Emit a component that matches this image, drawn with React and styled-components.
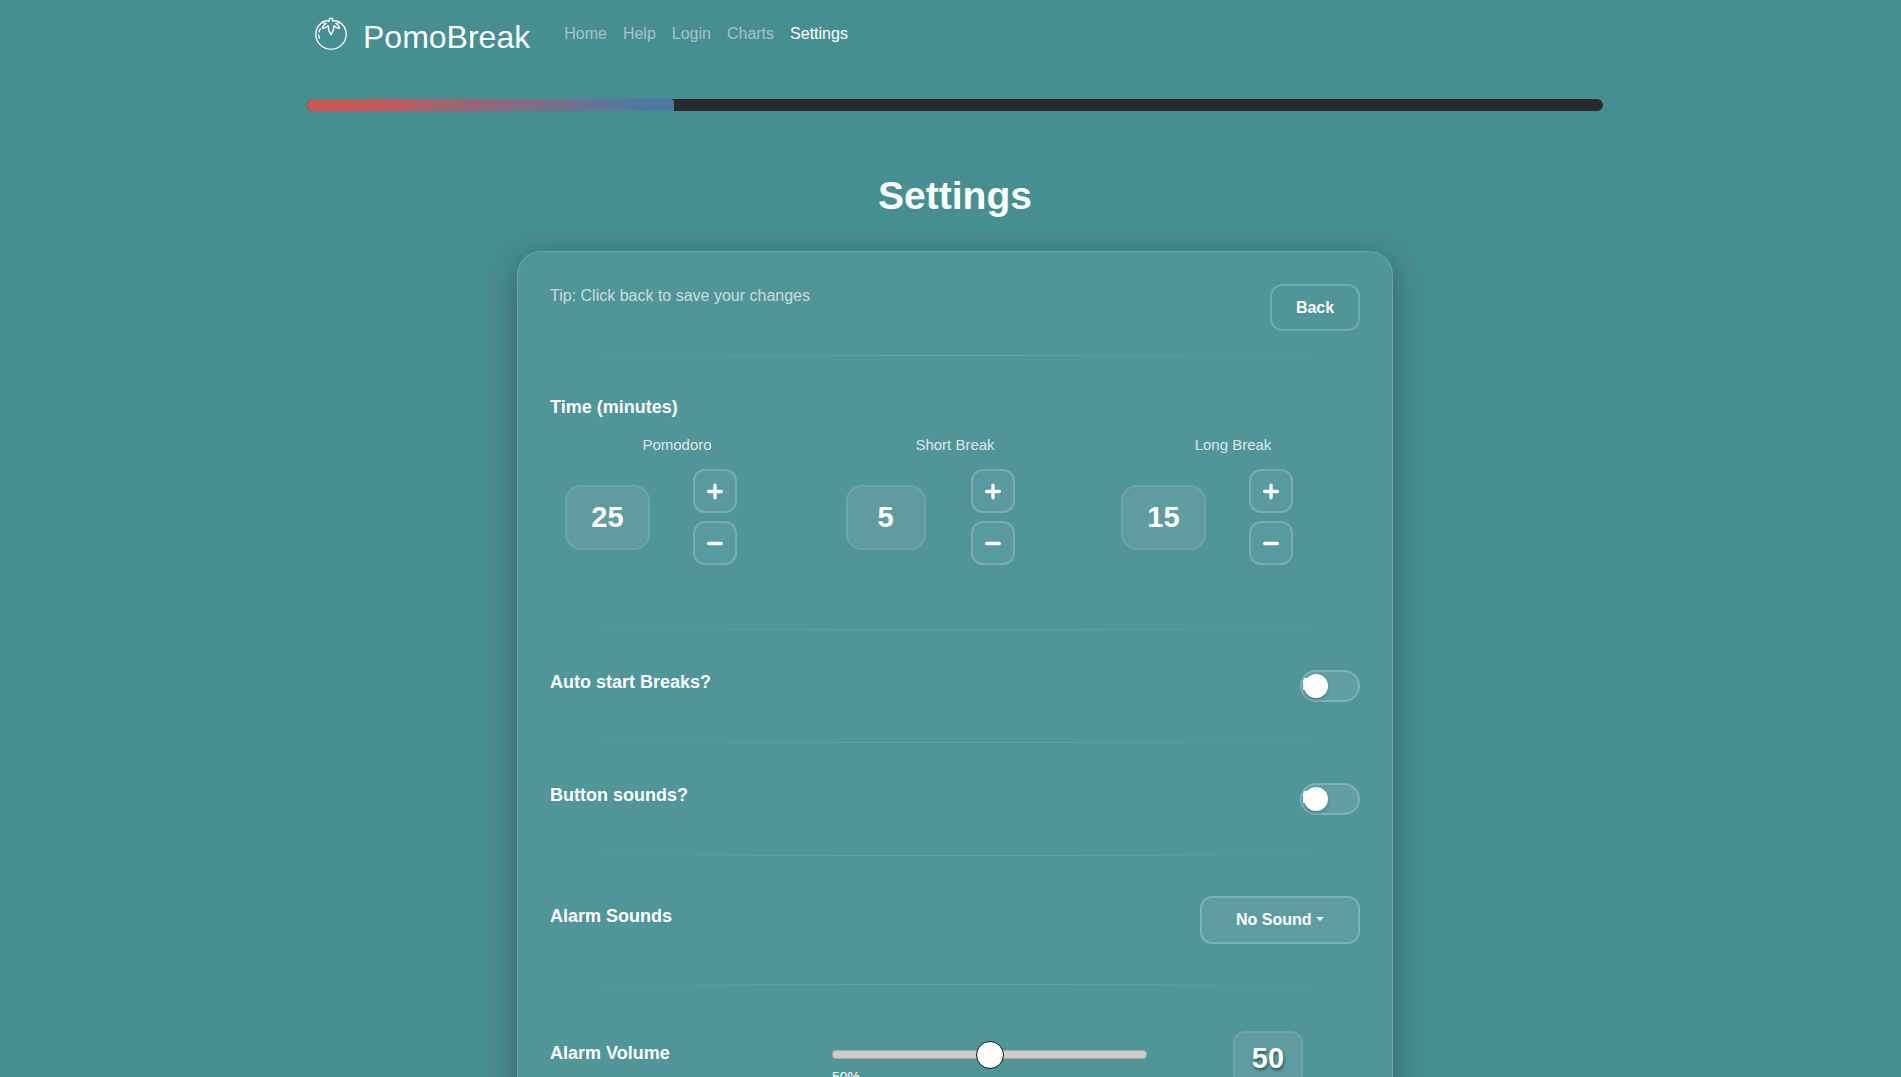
import React, { useState } from "react";
import styled, { createGlobalStyle } from "styled-components";

const GlobalStyle = createGlobalStyle`
  *, *::before, *::after { box-sizing: border-box; }
  body {
    margin: 0;
    background: #478e91;
    color: #fff;
    font-family: "Liberation Sans", Arial, sans-serif;
    font-size: 16px;
    line-height: 24px;
  }
  button, select, input { font: inherit; color: inherit; }
`;

const Page = styled.div`
  min-height: 100vh;
  padding: 0 0 48px 9px;
  overflow-x: hidden;
`;

const Container = styled.div`
  width: 100%;
  max-width: ${(p) => (p.$narrow ? "900px" : "1320px")};
  margin: 0 auto;
  padding: 0 12px;
`;

const Header = styled.header`
  display: flex;
  flex-wrap: wrap;
  align-items: flex-start;
  gap: 34px;
  padding: 13px 8px 38px;
`;

const Brand = styled.a`
  display: flex;
  align-items: flex-start;
  gap: 16px;
  color: #fff;
  text-decoration: none;
  font-size: 32px;
  line-height: 48px;

  svg { width: 32px; height: 42px; }
`;

const Nav = styled.nav`
  display: flex;
  gap: 16px;
  padding-top: 9px;
`;

const NavLink = styled.a`
  color: ${(p) => (p.$active ? "#fff" : "rgba(255, 255, 255, 0.5)")};
  text-decoration: none;
`;

const Track = styled.div`
  height: 12px;
  border-radius: 6px;
  background: #2a2a2a;
  overflow: hidden;
`;

const Fill = styled.div`
  height: 100%;
  border-radius: 0 4px 0 0;
  background: linear-gradient(90deg, #d25553 8%, #4f7aa3 92%);
`;

const Title = styled.h1`
  margin: 61px 0 31px;
  font-size: 39px;
  line-height: 48px;
  text-align: center;
`;

const Card = styled.main`
  padding: 32px;
  border: 1px solid rgba(255, 255, 255, 0.15);
  border-radius: 24px;
  background: #509598;
  box-shadow: 0 8px 32px rgba(0, 0, 0, 0.3);
`;

const Row = styled.section`
  display: flex;
  justify-content: space-between;
  align-items: flex-start;
  padding: ${(p) => (p.$first ? "0 0 24px" : "40px 0")};
`;

const Divider = styled.hr`
  height: 1px;
  margin: 0;
  border: 0;
  background: linear-gradient(90deg, transparent, rgba(255, 255, 255, 0.12), transparent);
`;

const Tip = styled.p`
  margin: 0;
  color: rgba(255, 255, 255, 0.7);
`;

const OutlineButton = styled.button`
  width: 90px;
  height: 47px;
  border: 2px solid rgba(255, 255, 255, 0.2);
  border-radius: 12px;
  background: transparent;
  font-weight: 700;
  cursor: pointer;
`;

const Label = styled.label`
  padding-top: ${(p) => p.$drop || 0}px;
  font-size: 18px;
  font-weight: 700;
  line-height: 24px;
`;

const TimeSection = styled.section`
  padding: 40px 0 64px;
`;

const SectionTitle = styled.h2`
  margin: 0 0 16px;
  font-size: 18px;
  line-height: 22px;
`;

const Timers = styled.div`
  display: grid;
  grid-template-columns: repeat(3, 1fr);
  margin: 0 -12px;
`;

const Timer = styled.div`
  display: grid;
  grid-template-columns: 1fr 1fr;
  align-items: center;
  row-gap: 13px;
`;

const TimerLabel = styled.label`
  grid-column: 1 / -1;
  text-align: center;
  font-size: 15px;
  line-height: 22px;
  color: rgba(255, 255, 255, 0.8);
`;

const Value = styled.output`
  justify-self: center;
  min-width: ${(p) => (p.$compact ? 70 : 80)}px;
  padding: ${(p) => (p.$compact ? "11px 16px" : "16px 24px")};
  border: 2px solid rgba(255, 255, 255, 0.1);
  border-radius: ${(p) => (p.$compact ? 12 : 16)}px;
  background: rgba(255, 255, 255, 0.08);
  font-size: 29px;
  font-weight: 700;
  line-height: 29px;
  text-align: center;
  text-shadow: ${(p) => (p.$compact ? "1px 2px 3px rgba(0, 0, 0, 0.5)" : "none")};
`;

const Steps = styled.div`
  display: flex;
  flex-direction: column;
  gap: 8px;
  padding-left: 16px;
`;

const StepButton = styled.button`
  display: grid;
  place-items: center;
  width: 44px;
  height: 44px;
  padding: 0;
  border: 2px solid rgba(255, 255, 255, 0.2);
  border-radius: 12px;
  background: rgba(255, 255, 255, 0.05);
  cursor: pointer;

  svg { width: 18px; height: 18px; }
`;

const Switch = styled.input.attrs({ type: "checkbox", role: "switch" })`
  appearance: none;
  display: flex;
  align-items: center;
  width: 60px;
  height: 32px;
  margin: 0;
  padding: 0 2px;
  border: 2px solid rgba(255, 255, 255, 0.2);
  border-radius: 16px;
  background:
    linear-gradient(#fff, #fff) 1px 6px / 6px 12px no-repeat padding-box,
    rgba(255, 255, 255, 0.1);
  cursor: pointer;

  &::before {
    content: "";
    width: 24px;
    height: 24px;
    border-radius: 50%;
    background: #fff;
    box-shadow: 0 2px 4px rgba(0, 0, 0, 0.2);
  }

  &:checked { justify-content: flex-end; background: rgba(255, 255, 255, 0.3); }
`;

const SelectWrap = styled.div`
  position: relative;
  width: 160px;
`;

const Select = styled.select`
  appearance: none;
  width: 100%;
  height: 48px;
  padding: 0 46px 0 34px;
  border: 2px solid rgba(255, 255, 255, 0.2);
  border-radius: 12px;
  background: rgba(255, 255, 255, 0.08);
  font-weight: 700;
  cursor: pointer;

  option { color: #222; }
`;

const Caret = styled.span`
  position: absolute;
  top: 21px;
  right: 36px;
  border: 4px solid transparent;
  border-top-color: #fff;
  border-bottom: 0;
  pointer-events: none;
`;

const VolumeRow = styled.section`
  display: grid;
  grid-template-columns: 253px 315px 1fr;
  column-gap: 29px;
  align-items: start;
  padding: 46px 0 40px;
`;

const SliderBlock = styled.div`
  display: flex;
  flex-direction: column;
  padding-top: 9px;
  font-size: 14px;
  line-height: 18px;
`;

const Slider = styled.input.attrs({ type: "range" })`
  appearance: none;
  width: 100%;
  height: 28px;
  margin: 0;
  background: transparent;
  cursor: pointer;

  &::-webkit-slider-runnable-track {
    height: 9px;
    border: 1px solid #b0a8a8;
    border-radius: 4px;
    background: #ccc;
  }
  &::-webkit-slider-thumb {
    appearance: none;
    width: 28px;
    height: 28px;
    margin-top: -10px;
    border: 1px solid #111;
    border-radius: 50%;
    background: #fff;
  }
`;

const Tomato = () => (
  <svg viewBox="0 0 32 42" fill="none" stroke="#fff" strokeWidth="1.3" strokeLinejoin="round" strokeLinecap="round" aria-hidden="true">
    <path d="M8.500 8.600C3.800 11 .8 15.800.8 21.300.8 29.600 7.500 36.200 16 36.200S31.200 29.600 31.200 21.300C31.200 15.800 28.200 11 23.500 8.600" />
    <path d="M14.400 8.200V5.500h3.200V8.200c2.600-.8 5-.5 7 1-1.200.9-2.400 1.300-3.800 1.300 2 .9 3.300 2.600 3.700 4.900-2.300-.3-4.200-1.200-5.600-2.700 0 3.300-.9 6.300-2.900 9.100-2-2.800-2.900-5.800-2.900-9.100-1.400 1.500-3.300 2.400-5.600 2.700.4-2.300 1.700-4 3.700-4.900-1.400 0-2.600-.4-3.800-1.300 2-1.500 4.400-1.800 7-1z" />
    <path d="M5.300 15.800c-.7 1-1.100 2-1.300 3.200M3.700 22c.1 1.200.3 2.200.8 3.200" />
  </svg>
);

const StepIcon = ({ plus }) => (
  <svg viewBox="0 0 18 18" stroke="#fff" strokeWidth="3.4" strokeLinecap="round" aria-hidden="true">
    <path d={plus ? "M2.700 9.500H15.300M9 3.200V15.800" : "M2.700 9.500H15.300"} />
  </svg>
);

const links = ["Home", "Help", "Login", "Charts", "Settings"];
const timerDefs = [
  { id: "pomodoro", label: "Pomodoro", initial: 25 },
  { id: "short", label: "Short Break", initial: 5 },
  { id: "long", label: "Long Break", initial: 15 },
];

function TimerControl({ id, label, initial }) {
  const [value, setValue] = useState(initial);
  return (
    <Timer>
      <TimerLabel htmlFor={id}>{label}</TimerLabel>
      <Value id={id}>{value}</Value>
      <Steps>
        <StepButton type="button" aria-label={`Increase ${label}`} onClick={() => setValue(value + 1)}>
          <StepIcon plus />
        </StepButton>
        <StepButton type="button" aria-label={`Decrease ${label}`} onClick={() => setValue(Math.max(1, value - 1))}>
          <StepIcon />
        </StepButton>
      </Steps>
    </Timer>
  );
}

export default function App() {
  const [volume, setVolume] = useState(50);
  const progress = 28.3;

  return (
    <Page>
      <GlobalStyle />
      <Container>
        <Header>
          <Brand href="#">
            <Tomato />
            PomoBreak
          </Brand>
          <Nav>
            {links.map((name) => (
              <NavLink key={name} href="#" $active={name === "Settings"}>{name}</NavLink>
            ))}
          </Nav>
        </Header>
        <Track role="progressbar" aria-label="Timer progress" aria-valuenow={progress}>
          <Fill style={{ width: `${progress}%` }} />
        </Track>
        <Title>Settings</Title>
      </Container>
      <Container $narrow>
        <Card>
          <Row $first>
            <Tip>Tip: Click back to save your changes</Tip>
            <OutlineButton type="button">Back</OutlineButton>
          </Row>
          <Divider />
          <TimeSection>
            <SectionTitle>Time (minutes)</SectionTitle>
            <Timers>
              {timerDefs.map((t) => <TimerControl key={t.id} {...t} />)}
            </Timers>
          </TimeSection>
          <Divider />
          <Row>
            <Label htmlFor="auto-start">Auto start Breaks?</Label>
            <Switch id="auto-start" />
          </Row>
          <Divider />
          <Row>
            <Label htmlFor="button-sounds">Button sounds?</Label>
            <Switch id="button-sounds" />
          </Row>
          <Divider />
          <Row>
            <Label htmlFor="alarm-sound" $drop={8}>Alarm Sounds</Label>
            <SelectWrap>
              <Select id="alarm-sound">
                <option>No Sound</option>
              </Select>
              <Caret />
            </SelectWrap>
          </Row>
          <Divider />
          <VolumeRow>
            <Label htmlFor="alarm-volume" $drop={10}>Alarm Volume</Label>
            <SliderBlock>
              <Slider id="alarm-volume" min="0" max="100" value={volume} onChange={(e) => setVolume(Number(e.target.value))} />
              <span>{volume}%</span>
            </SliderBlock>
            <Value htmlFor="alarm-volume" $compact>{volume}</Value>
          </VolumeRow>
        </Card>
      </Container>
    </Page>
  );
}
